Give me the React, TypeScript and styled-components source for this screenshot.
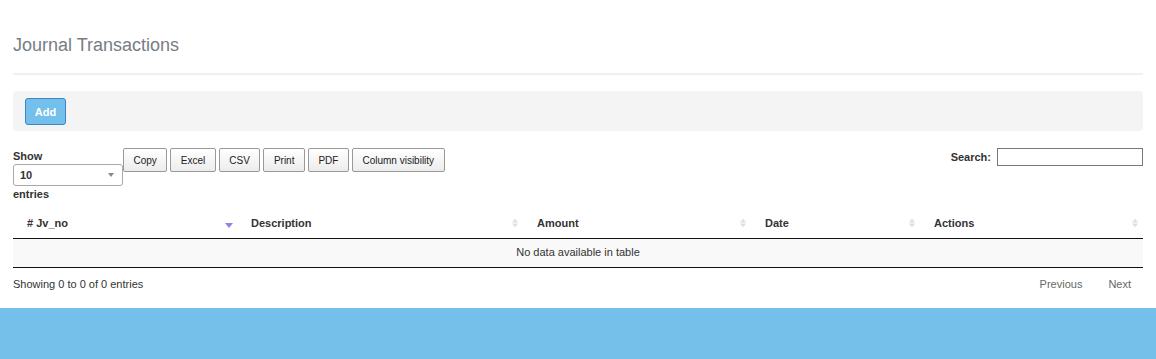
import React from 'react';
import styled, { createGlobalStyle } from 'styled-components';

const GlobalStyle = createGlobalStyle`
  html, body {
    margin: 0;
    padding: 0;
    background: #ffffff;
    font-family: "Liberation Sans", Arial, sans-serif;
    color: #333;
  }
`;

const Page = styled.div`
  display: flex;
  flex-direction: column;
  min-height: 100vh;
`;

const Content = styled.main`
  padding: 0 13px;
  flex: 1;
`;

const TitleBar = styled.div`
  padding: 35px 0 18px;
  border-bottom: 2px solid #eef0f3;
`;

const Title = styled.h3`
  margin: 0;
  font-size: 18px;
  line-height: 20px;
  font-weight: 400;
  color: #767d85;
`;

const Toolbar = styled.div`
  margin-top: 16px;
  height: 40px;
  box-sizing: border-box;
  padding: 7px 12px;
  background: #f4f4f4;
  border-radius: 4px;
  display: flex;
  align-items: flex-start;
`;

const AddButton = styled.button`
  height: 27px;
  width: 41px;
  padding: 0;
  background: #74c0ec;
  border: 1px solid #3d85c6;
  border-radius: 3px;
  color: #ffffff;
  font-family: inherit;
  font-size: 11px;
  font-weight: 700;
`;

const Controls = styled.div`
  margin-top: 17px;
  display: flex;
  justify-content: space-between;
  align-items: flex-start;
`;

const LeftControls = styled.div`
  display: flex;
  align-items: flex-start;
`;

const LengthBox = styled.div`
  width: 110px;
  font-size: 11px;
  font-weight: 700;
  line-height: 13px;
  padding-top: 2px;
`;

const Select = styled.div`
  margin: 1px 0 2px;
  height: 22px;
  box-sizing: border-box;
  border: 1px solid #aaa;
  border-radius: 3px;
  display: flex;
  align-items: center;
  justify-content: space-between;
  padding: 0 8px 0 6px;
  font-weight: 700;
  background: #fff;
`;

const Caret = styled.span`
  width: 0;
  height: 0;
  border-left: 3px solid transparent;
  border-right: 3px solid transparent;
  border-top: 4px solid #888;
`;

const ButtonGroup = styled.div`
  display: flex;
  gap: 3px;
`;

const ExportButton = styled.button`
  height: 24px;
  padding: 0 9.5px;
  box-sizing: border-box;
  background: linear-gradient(to bottom, #ffffff 0%, #ececec 100%);
  border: 1px solid #999;
  border-radius: 2px;
  font-family: inherit;
  font-size: 10px;
  color: #222;
`;

const SearchLabel = styled.label`
  display: flex;
  align-items: center;
  gap: 6px;
  font-size: 11px;
  font-weight: 700;
`;

const SearchInput = styled.input`
  width: 146px;
  height: 18px;
  box-sizing: border-box;
  border: 1px solid #777;
  padding: 0 4px;
  margin: 0;
`;

const Table = styled.table`
  margin-top: 7px;
  width: 100%;
  border-collapse: collapse;
  font-size: 11px;
  table-layout: fixed;
`;

const Th = styled.th<{ $w: number }>`
  position: relative;
  box-sizing: border-box;
  width: ${(p) => p.$w}px;
  text-align: left;
  font-weight: 700;
  padding: 9px 14px 8px;
  line-height: 13px;
  border-bottom: 1px solid #111;
`;

const SortIcon = styled.span<{ $active?: boolean }>`
  position: absolute;
  right: 4px;
  top: 50%;
  width: 8px;
  transform: translateY(-50%);
  display: flex;
  flex-direction: column;
  align-items: center;
  gap: 1px;

  &::before {
    content: '';
    border-left: 3px solid transparent;
    border-right: 3px solid transparent;
    border-bottom: 4px solid ${(p) => (p.$active ? 'transparent' : '#e0e0e0')};
  }
  &::after {
    content: '';
    border-left: ${(p) => (p.$active ? 4 : 3)}px solid transparent;
    border-right: ${(p) => (p.$active ? 4 : 3)}px solid transparent;
    border-top: ${(p) => (p.$active ? '5px solid #8888e8' : '4px solid #e0e0e0')};
  }
`;

const EmptyCell = styled.td`
  text-align: center;
  background: #f9f9f9;
  padding: 7px 10px 8px;
  line-height: 13px;
  border-bottom: 1px solid #111;
`;

const Footer = styled.div`
  display: flex;
  justify-content: space-between;
  align-items: center;
  margin-top: 8px;
  font-size: 11px;
`;

const Info = styled.div`
  color: #333;
`;

const Pager = styled.div`
  display: flex;
  padding-right: 12px;
  gap: 26px;
`;

const PageLink = styled.span`
  color: #666;
  padding: 2px 0;
`;

const BlueBand = styled.div`
  margin-top: 16px;
  height: 60px;
  background: #74c0eb;
`;

const columns = [
  { label: '# Jv_no', width: 224, active: true },
  { label: 'Description', width: 286 },
  { label: 'Amount', width: 228 },
  { label: 'Date', width: 169 },
  { label: 'Actions', width: 223 },
];

const exportButtons = ['Copy', 'Excel', 'CSV', 'Print', 'PDF', 'Column visibility'];

const App: React.FC = () => {
  return (
    <Page>
      <GlobalStyle />
      <Content>
        <TitleBar>
          <Title>Journal Transactions</Title>
        </TitleBar>
        <Toolbar>
          <AddButton>Add</AddButton>
        </Toolbar>
        <Controls>
          <LeftControls>
            <LengthBox>
              Show
              <Select>
                <span>10</span>
                <Caret />
              </Select>
              entries
            </LengthBox>
            <ButtonGroup>
              {exportButtons.map((b) => (
                <ExportButton key={b}>{b}</ExportButton>
              ))}
            </ButtonGroup>
          </LeftControls>
          <SearchLabel>
            Search:
            <SearchInput type="search" />
          </SearchLabel>
        </Controls>
        <Table>
          <thead>
            <tr>
              {columns.map((c) => (
                <Th key={c.label} $w={c.width}>
                  {c.label}
                  <SortIcon $active={c.active} />
                </Th>
              ))}
            </tr>
          </thead>
          <tbody>
            <tr>
              <EmptyCell colSpan={5}>No data available in table</EmptyCell>
            </tr>
          </tbody>
        </Table>
        <Footer>
          <Info>Showing 0 to 0 of 0 entries</Info>
          <Pager>
            <PageLink>Previous</PageLink>
            <PageLink>Next</PageLink>
          </Pager>
        </Footer>
      </Content>
      <BlueBand />
    </Page>
  );
};

export default App;
